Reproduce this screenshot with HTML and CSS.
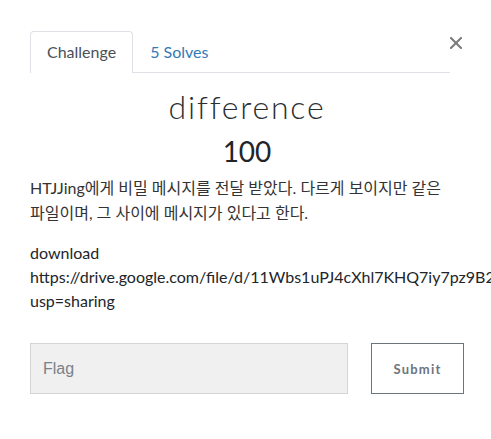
FILE: index.html
```html
<!DOCTYPE html>
<html lang="ko">
<head>
<meta charset="utf-8">
<title>difference</title>
<link rel="stylesheet" href="styles.css">
</head>
<body>
<div class="modal">
  <div class="tabs-row">
    <ul class="tabs">
      <li class="tab active">Challenge</li>
      <li class="tab link">5 Solves</li>
    </ul>
    <button class="close" aria-label="Close">
      <svg width="12" height="12" viewBox="0 0 12 12"><path d="M1 1L11 11M11 1L1 11" stroke="#7a7a7a" stroke-width="2" stroke-linecap="square"/></svg>
    </button>
  </div>
  <h2 class="title">difference</h2>
  <h3 class="value">100</h3>
  <div class="desc">
    <p class="intro">HTJJing에게 비밀 메시지를 전달 받았다. 다르게 보이지만 같은 파일이며, 그 사이에 메시지가 있다고 한다.</p>
    <p>download<br><span class="url">https://drive.google.com/file/d/11Wbs1uPJ4cXhl7KHQ7iy7pz9B2</span><br>usp=sharing</p>
  </div>
  <form class="submit-row">
    <input class="flag" type="text" placeholder="Flag">
    <button class="submit" type="button">Submit</button>
  </form>
</div>
</body>
</html>
```
FILE: styles.css
```css
html, body {
  margin: 0;
  padding: 0;
  background: #fff;
  overflow: hidden;
}
body {
  font-family: Lato, "Noto Sans CJK KR", sans-serif;
  color: #212529;
  font-size: 16px;
  line-height: 1.5;
}
.modal {
  width: 434px;
  padding: 31px 0 0 30px;
}
.tabs-row {
  display: flex;
  align-items: flex-start;
}
.tabs {
  list-style: none;
  margin: 0;
  padding: 0;
  width: 420px;
  display: flex;
  border-bottom: 1px solid #dee2e6;
}
.tab {
  padding: 8px 16px;
  border: 1px solid transparent;
  border-bottom: none;
  margin-bottom: -1px;
  border-radius: 4px 4px 0 0;
  color: #495057;
}
.tab.active {
  border-color: #dee2e6;
  background: #fff;
  padding-bottom: 9px;
}
.tab.link {
  color: #337ab7;
}
.close {
  border: none;
  background: none;
  padding: 0;
  margin: 6px 0 0 -1px;
  width: 14px;
  height: 12px;
  display: flex;
  justify-content: center;
}
.title {
  margin: 14px 0 0;
  text-align: center;
  font-weight: 300;
  font-size: 32px;
  line-height: 40px;
  letter-spacing: 1.8px;
  color: #2b2f33;
}
.value {
  margin: 6px 0 0;
  text-align: center;
  font-weight: 400;
  font-size: 28px;
  line-height: 36px;
  color: #212529;
}
.desc {
  margin-top: 6px;
}
.desc p {
  margin: 0 0 16px;
}
.desc .intro {
  line-height: 25px;
  word-break: keep-all;
  color: #333;
}
.url {
  white-space: nowrap;
}
.submit-row {
  display: flex;
  gap: 23px;
  margin-top: 30px;
}
.flag {
  width: 318px;
  height: 51px;
  box-sizing: border-box;
  background: #f0f0f0;
  border: 1px solid #d4d4d4;
  padding: 0 12px;
  font-family: "Liberation Sans", Arial, sans-serif;
  font-size: 16px;
  color: #495057;
  outline: none;
}
.flag::placeholder {
  color: #7b8188;
}
.submit {
  width: 93px;
  height: 51px;
  background: #fff;
  border: 1px solid #6c757d;
  color: #6c757d;
  font-family: Lato, sans-serif;
  font-weight: 700;
  font-size: 13px;
  letter-spacing: 1.2px;
}
```
